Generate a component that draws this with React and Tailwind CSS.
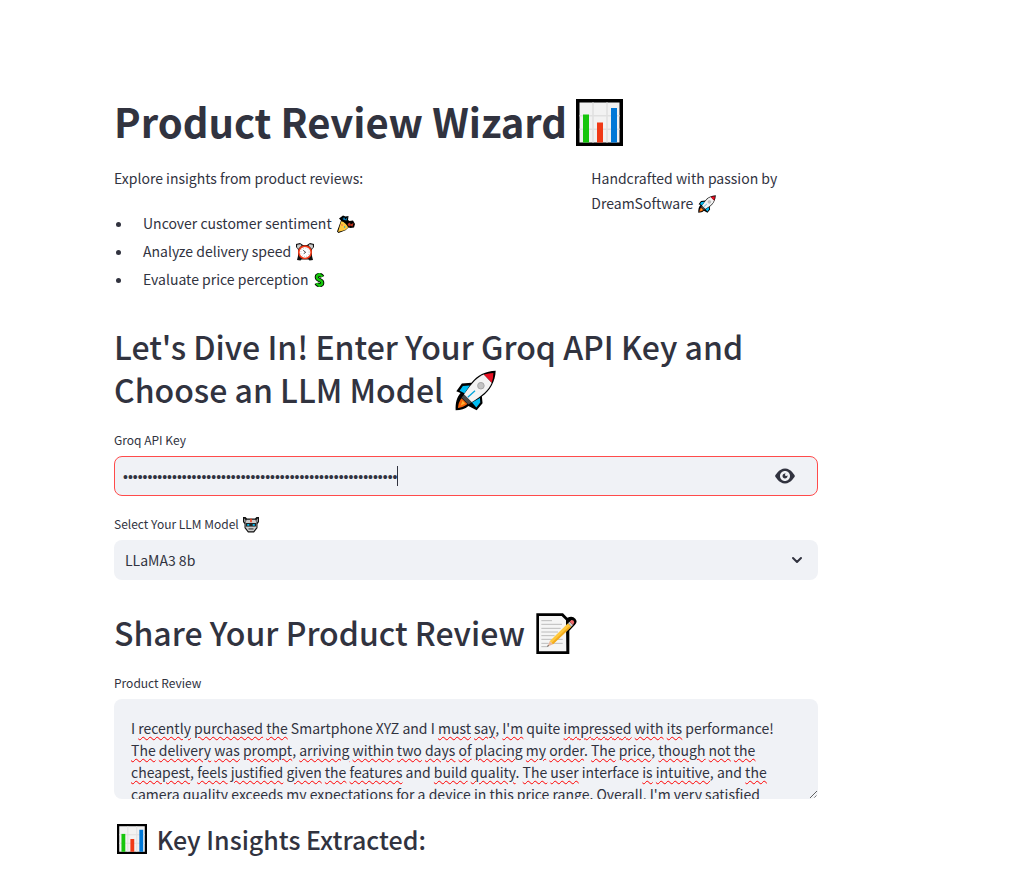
import { useState } from "react";
import { ChevronDown } from "lucide-react";

const WORDMARKS = [
  "I ~recently ~purchased ~the Smartphone XYZ and I ~must ~say, ~I'm quite ~impressed ~with ~its performance!",
  "~The ~delivery ~was ~prompt, ~arriving ~within ~two ~days ~of ~placing ~my ~order. ~The ~price, ~though ~not ~the",
  "~cheapest, ~feels ~justified ~given ~the ~features and ~build ~quality. ~The ~user interface ~is ~intuitive, and ~the",
  "camera quality exceeds my expectations for a device in this price range. Overall, I'm very satisfied",
].join(" ").split(" ");

const REVIEW = WORDMARKS.map((w) => w.replace("~", "")).join(" ");

function Flagged({ word }) {
  if (word[0] !== "~") return <>{word} </>;
  const [, body, tail] = word.match(/^~([\w']+)(.*)$/);
  return (
    <>
      <span className="underline decoration-[#ff0000] decoration-wavy decoration-1 underline-offset-2">{body}</span>
      {tail}{" "}
    </>
  );
}

function Chart({ className }) {
  return (
    <svg viewBox="0 0 47 47" className={className} aria-hidden="true">
      <rect width="47" height="47" fill="#000" />
      <rect x="3.5" y="3.5" width="40" height="40" fill="#f2f2f2" />
      <path d="M17 3.5V43.5M31 3.5V43.5M3.5 16.7H43.5M3.5 30.3H43.5" stroke="#e0e0e0" strokeWidth="1.6" />
      <rect x="7" y="15.5" width="6" height="28" fill="#16c60c" />
      <rect x="21" y="23.5" width="6" height="20" fill="#f03a17" />
      <rect x="35" y="9" width="6" height="34.5" fill="#0078d7" />
    </svg>
  );
}

function Rocket({ className }) {
  return (
    <svg viewBox="41 29 125 123" className={className} aria-hidden="true">
      <path d="M165 30C135 31 108 44 91 67L62 69L45 93L58 98C46 112 42 128 43 151C58 151 72 148 82 138L107 151L125 129L123 109C148 91 164 62 165 30Z" fill="#000" />
      <path d="M129 42C110 50 94 65 68 103L92 126C128 104 144 88 153 67Z" fill="#f4f4f4" />
      <path d="M129 42Q143 37 158 37Q158 53 153 67Z" fill="#e81224" />
      <path d="M65 77L86 75L70 99L55 91ZM117 113L118 127L106 142L93 127Z" fill="#00bcf2" />
      <path d="M80 111L102 91" stroke="#00a4dc" strokeWidth="4" />
      <path d="M69 103L92 126L82 133L61 112Z" fill="#4a4a4a" />
      <path d="M61 114L79 132Q66 143 50 144Q51 126 61 114Z" fill="#f7630c" />
      <path d="M64 122L72 130L58 137Z" fill="#ffb02e" />
      <circle cx="120" cy="76" r="10" fill="#c3c3c3" stroke="#a5a5a5" strokeWidth="3" />
    </svg>
  );
}

function Memo({ className }) {
  return (
    <svg viewBox="50 38 123 123" className={className} aria-hidden="true">
      <path d="M51 39H131L144 52Q160 46 168 55Q176 64 167 73L150 91V161H51Z" fill="#000" />
      <path d="M59 47H127L140 60V68L141 153H59Z" fill="#f5f5f5" />
      <path d="M66 61H98M66 72H128M66 84H124M66 95H116M66 106H106M66 117H98M106 117H130M66 129H88M98 129H130M66 139H84" stroke="#bcbcbc" strokeWidth="3" />
      <path d="M146 69L156 79L101 132L91 123Z" fill="#ffc83d" />
      <path d="M148 79L156 79L101 132L97 128Z" fill="#f3aa1c" />
      <path d="M91 123L101 132L84 139Z" fill="#e8b9a0" />
      <path d="M86 133L89 137L83 140Z" fill="#555" />
      <path d="M146 69L151 64L161 74L156 79Z" fill="#ccc" />
      <path d="M151 64L156 59Q163 58 165 66L161 74Z" fill="#f06a6a" />
    </svg>
  );
}

function Popper({ className }) {
  return (
    <svg viewBox="0 0 18 18" className={className} aria-hidden="true">
      <path d="M6 0.5L8.5 1.5L11.5 1L11 5L12.5 6L16 5.5L18 9L17 12.5L13.5 13L11.5 12.5L8.5 15.2L1.5 18L0 16.5L4 5.5L2 3.5Z" fill="#000" />
      <path d="M4.2 6.2Q6.5 6.5 8.8 9Q11 11 11 12.8L8.2 15L1 17Z" fill="#ffc83d" />
      <path d="M4 3L6 4L7 2L8.5 4.5L10.5 2L9.5 5.5L7 5Z" fill="#0f7fb8" />
      <path d="M10.5 9L13 7.5L13.5 9.5L16.5 8L15.5 11.5L13 10.5L12 11.7Z" fill="#c1361f" />
      <circle cx="5" cy="10" r="0.7" fill="#e74856" />
      <circle cx="7.6" cy="12" r="0.7" fill="#00a4dc" />
    </svg>
  );
}

function Alarm({ className }) {
  return (
    <svg viewBox="0 0 18 18" className={className} aria-hidden="true">
      <path d="M0 1L4 0L7 2H11L14 0L18 1V4L16 6.5V13L17 17L13.5 17.5L12.5 16.5H5.5L4.5 17.5L1 17L2 13V6.5L0 4Z" fill="#111" />
      <path d="M1.2 1.8L4.5 1.3L5.5 2.5L2 6L1 4ZM16.8 1.8L13.5 1.3L12.5 2.5L16 6L17 4Z" fill="#ccc" />
      <circle cx="9" cy="9.3" r="6.2" fill="#fff" stroke="#f03a17" strokeWidth="1.6" />
      <circle cx="9" cy="9.3" r="4.2" fill="none" stroke="#999" strokeWidth="0.7" strokeDasharray="0.7 1.5" />
      <path d="M7.2 7.3L9.7 9.3L7.7 10.7" fill="none" stroke="#333" strokeWidth="0.9" />
    </svg>
  );
}

function Dollar({ className }) {
  const s = "M8.3 5.8Q7.5 4 5.5 4Q2.8 4 2.8 6Q2.8 8 5.5 9Q8.2 10 8.2 12Q8.2 14 5.5 14Q3.2 14 2.5 12.3M5.5 2V4M5.5 14V16";
  return (
    <svg viewBox="0 0 11 18" className={className} aria-hidden="true">
      <path d={s} fill="none" stroke="#000" strokeWidth="4.2" />
      <path d={s} fill="none" stroke="#16c60c" strokeWidth="2.4" />
    </svg>
  );
}

function Robot({ className }) {
  return (
    <svg viewBox="0 0 16 16" className={className} aria-hidden="true">
      <path d="M0 0H2.5L4 1.5H12L13.5 0H16V5L14.5 7V11L11 15.5H5L1.5 11V7L0 5Z" fill="#111" />
      <path d="M1 1.2L2.7 3V6L1 4.5ZM15 1.2L13.3 3V6L15 4.5Z" fill="#999" />
      <path d="M3.5 2.8H12.5L13.4 6V10.5L10.5 14.2H5.5L2.6 10.5V6Z" fill="#ccc" />
      <path d="M7.2 1.8H8.8V5.2H7.2Z" fill="#f03a17" />
      <path d="M3 6H13V9.6H3Z" fill="#222" />
      <path d="M4.2 7H6.3V8.8H4.2ZM9.7 7H11.8V8.8H9.7Z" fill="#00bcf2" />
      <path d="M5.5 11.2H10.5V12.6H5.5Z" fill="#555" />
    </svg>
  );
}

function Eye({ className }) {
  return (
    <svg viewBox="0 0 8 8" fill="currentColor" className={className} aria-hidden="true">
      <path d="M4.03 1C1.5 1 0 4 0 4s1.5 3 4.03 3C6.5 7 8 4 8 4S6.5 1 4.03 1zM4 2c1.11 0 2 .9 2 2 0 1.11-.89 2-2 2-1.1 0-2-.89-2-2 0-1.1.9-2 2-2zm0 1c-.55 0-1 .45-1 1s.45 1 1 1 1-.45 1-1c0-.1-.04-.19-.06-.28a.5.5 0 0 1-.44.28.5.5 0 0 1-.5-.5c0-.2.12-.36.28-.44C4.19 3.04 4.1 3 4 3z" />
    </svg>
  );
}

const FEATURES = [
  { text: "Uncover customer sentiment", icon: <Popper className="-my-1 ml-0.5 inline size-[18px] align-baseline" /> },
  { text: "Analyze delivery speed", icon: <Alarm className="-my-1 ml-0.5 inline size-[18px] align-baseline" /> },
  { text: "Evaluate price perception", icon: <Dollar className="-my-1 ml-0.5 inline h-[18px] w-[11px] align-baseline" /> },
];

export default function App() {
  const [key, setKey] = useState("gsk_".padEnd(56, "x"));
  const [shown, setShown] = useState(false);
  const [model, setModel] = useState("LLaMA3 8b");
  const [review, setReview] = useState(REVIEW);

  return (
    <main className="min-h-screen bg-white pt-[95px] pr-4 pb-4 pl-[114px] font-['Noto_Sans_CJK_SC',sans-serif] text-[14px] leading-[25px] text-[#31333f]">
      <div className="max-w-[704px]">
        <h1 className="text-[40px] leading-[53px] font-bold">
          Product Review Wizard <Chart className="-my-2 inline size-[47px] align-baseline" />
        </h1>

        <div className="mt-[18px] grid grid-cols-[2fr_1fr] gap-6">
          <div>
            <p>Explore insights from product reviews:</p>
            <ul className="mt-5 flex list-disc flex-col gap-1 pl-[19px] leading-6">
              {FEATURES.map((f) => (
                <li key={f.text} className="pl-[10px]">
                  {f.text} {f.icon}
                </li>
              ))}
            </ul>
          </div>
          <p>
            Handcrafted with passion by DreamSoftware <Rocket className="-my-1 ml-0.5 inline size-[18px] align-baseline" />
          </p>
        </div>

        <h2 className="mt-[34px] text-[32px] leading-[43px] font-medium">
          Let's Dive In! Enter Your Groq API Key and Choose an LLM Model{" "}
          <Rocket className="-my-2 ml-1 inline size-[41px] align-baseline" />
        </h2>

        <label htmlFor="api-key" className="mt-[17px] block text-[12px] leading-6">
          Groq API Key
        </label>
        <div className="relative mt-1 flex h-10 items-center rounded-lg border border-[#ff4b4b] bg-[#f0f2f6]">
          <input
            id="api-key"
            type={shown ? "text" : "password"}
            value={key}
            onChange={(e) => setKey(e.target.value)}
            className="h-full min-w-0 flex-1 bg-transparent px-2 pt-0.5 font-['Liberation_Sans',sans-serif] text-[14px] outline-none"
          />
          <span className="absolute top-[9px] left-[282px] h-5 w-px bg-[#31333f]" />
          <button
            type="button"
            aria-label="Show password text"
            onClick={() => setShown(!shown)}
            className="mr-[22px] flex h-full items-center"
          >
            <Eye className="size-5" />
          </button>
        </div>

        <label htmlFor="model" className="mt-4 block text-[12px] leading-6">
          Select Your LLM Model <Robot className="-my-1 ml-0.5 inline size-4 align-baseline" />
        </label>
        <div className="relative mt-1">
          <select
            id="model"
            value={model}
            onChange={(e) => setModel(e.target.value)}
            className="h-10 w-full appearance-none rounded-lg bg-[#f0f2f6] pr-10 pl-[11px] outline-none"
          >
            <option>LLaMA3 8b</option>
          </select>
          <ChevronDown className="pointer-events-none absolute top-3 right-[13px] size-4" strokeWidth={3} />
        </div>

        <h2 className="mt-[31px] text-[32px] leading-[43px] font-medium">
          Share Your Product Review <Memo className="-my-2 ml-1 inline size-[41px] align-baseline" />
        </h2>

        <label htmlFor="review" className="mt-[17px] block text-[12px] leading-6">
          Product Review
        </label>
        <div className="mt-1 grid h-[100px] overflow-hidden rounded-lg bg-[#f0f2f6] leading-[22px]">
          <textarea
            id="review"
            value={review}
            spellCheck={false}
            onChange={(e) => setReview(e.target.value)}
            className="col-start-1 row-start-1 h-[100px] resize-y overflow-hidden bg-transparent px-[17px] pt-[18px] outline-none"
          />
          {review === REVIEW && (
            <div
              aria-hidden="true"
              className="pointer-events-none col-start-1 row-start-1 h-[100px] overflow-hidden px-[17px] pt-[18px] text-transparent"
            >
              {WORDMARKS.map((w, i) => (
                <Flagged key={i} word={w} />
              ))}
            </div>
          )}
        </div>

        <h3 className="mt-[23px] text-[25px] leading-[34px] font-medium">
          <Chart className="-my-1 mr-1 ml-[3px] inline size-[30px] align-baseline" /> Key Insights Extracted:
        </h3>
      </div>
    </main>
  );
}
